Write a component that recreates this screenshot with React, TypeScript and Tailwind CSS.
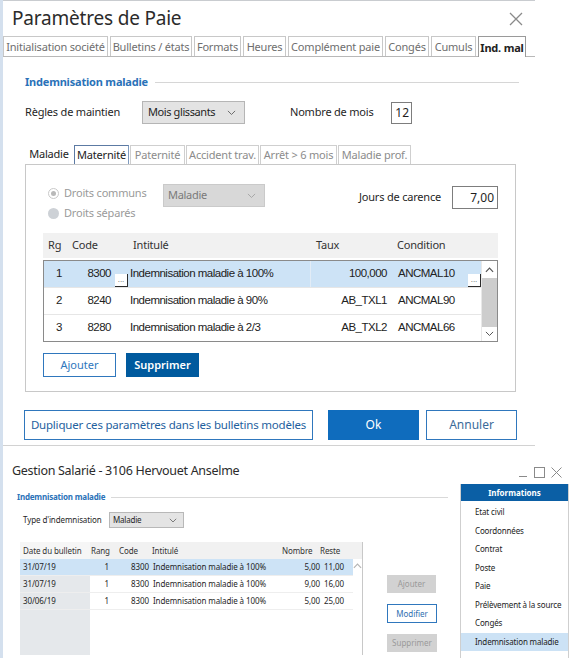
import React from "react";

const Chevron = ({ color = "#6b6b6b", w = 9 }: { color?: string; w?: number }) => (
  <svg width={w} height={w * 0.6} viewBox="0 0 10 6" fill="none">
    <path d="M1 1 L5 5 L9 1" stroke={color} strokeWidth="1.1" />
  </svg>
);

const UpArrow = ({ color = "#555" }: { color?: string }) => (
  <svg width="9" height="6" viewBox="0 0 10 6" fill="none">
    <path d="M1 5 L5 1 L9 5" stroke={color} strokeWidth="1.3" />
  </svg>
);

const Dots = () => (
  <div className="absolute right-0 bottom-0 w-[13px] h-[13px] border-r border-b border-[#2b2b2b] bg-white flex items-end justify-center text-[8px] leading-[8px] text-[#555] pb-[2px] tracking-normal">
    ...
  </div>
);

const topTabs = [
  { t: "Initialisation société", w: 105 },
  { t: "Bulletins / états", w: 82 },
  { t: "Formats", w: 47 },
  { t: "Heures", w: 43 },
  { t: "Complément paie", w: 95 },
  { t: "Congés", w: 44 },
  { t: "Cumuls", w: 45 },
  { t: "Ind. mal", w: 48, active: true },
];

const innerTabs = [
  { t: "Maladie", w: 48, kind: "sel" },
  { t: "Maternité", w: 55, kind: "focus" },
  { t: "Paternité", w: 55, kind: "dis" },
  { t: "Accident trav.", w: 73, kind: "dis" },
  { t: "Arrêt > 6 mois", w: 77, kind: "dis" },
  { t: "Maladie prof.", w: 73, kind: "dis" },
];

const rows = [
  { rg: "1", code: "8300", lib: "Indemnisation maladie à 100%", taux: "100,000", cond: "ANCMAL10", sel: true },
  { rg: "2", code: "8240", lib: "Indemnisation maladie à 90%", taux: "AB_TXL1", cond: "ANCMAL90" },
  { rg: "3", code: "8280", lib: "Indemnisation maladie à 2/3", taux: "AB_TXL2", cond: "ANCMAL66" },
];

const bRows = [
  { d: "31/07/19", n: "5,00", r: "11,00", sel: true },
  { d: "31/07/19", n: "9,00", r: "16,00" },
  { d: "30/06/19", n: "5,00", r: "25,00" },
];

const menu = [
  "Etat civil",
  "Coordonnées",
  "Contrat",
  "Poste",
  "Paie",
  "Prélèvement à la source",
  "Congés",
  "Indemnisation maladie",
];

export default function App() {
  return (
    <div className="w-[575px] h-[658px] bg-white overflow-hidden border-l-[3px] border-[#d4e0ee] font-['Noto_Sans',sans-serif] text-[#1f1f1f]">
      {/* ===== Top dialog ===== */}
      <div className="w-[532px] border-t border-[#c9ccd0]">
        <div className="h-[35px] flex items-center justify-between pl-[9px] pr-[12px]">
          <span className="text-[19px] text-[#2b2b2b] tracking-[-0.2px]">Paramètres de Paie</span>
          <svg width="14" height="14" viewBox="0 0 14 14" fill="none">
            <path d="M1 1 L13 13 M13 1 L1 13" stroke="#8a8a8a" strokeWidth="1.3" />
          </svg>
        </div>
        <div className="h-[21px] flex items-end border-b border-[#b8b8b8]">
          {topTabs.map((tab, i) => (
            <div
              key={i}
              style={{ width: tab.w }}
              className={
                "h-[20px] flex items-center justify-center border border-b-0 text-[11px] leading-none whitespace-nowrap tracking-[-0.2px] " +
                (i === 0 ? "ml-0 " : "ml-[2px] ") +
                (tab.active
                  ? "bg-white border-[#9a9a9a] font-bold text-[#222] h-[21px] -mb-px"
                  : "border-[#c8c8c8] text-[#6e6e6e]")
              }
            >
              {tab.t}
            </div>
          ))}
        </div>

        <div className="pl-[22px] pr-[16px]">
          {/* group label */}
          <div className="mt-[17px] flex items-center h-[16px]">
            <span className="text-[11px] font-bold text-[#2a72b8] tracking-[-0.2px]">Indemnisation maladie</span>
            <div className="flex-1 h-px bg-[#d6d6d6] ml-[7px]" />
          </div>

          {/* regles */}
          <div className="mt-[11px] h-[23px] flex items-center">
            <span className="w-[117px] text-[11px] tracking-[-0.2px]">Règles de maintien</span>
            <div className="w-[103px] h-[23px] bg-[#e3e3e3] border border-[#b5b5b5] flex items-center justify-between pl-[5px] pr-[8px]">
              <span className="text-[11px] tracking-[-0.4px]">Mois glissants</span>
              <Chevron />
            </div>
            <span className="ml-[45px] w-[101px] text-[11px] tracking-[-0.2px]">Nombre de mois</span>
            <div className="w-[21px] h-[22px] border border-[#7d7d7d] flex items-center justify-end pr-[2px] text-[12px]">12</div>
          </div>

          {/* inner tabs */}
          <div className="mt-[21px] w-[491px]">
            <div className="h-[19px] flex items-end">
              {innerTabs.map((tab, i) => (
                <div
                  key={i}
                  style={{ width: tab.w }}
                  className={
                    "h-[19px] flex items-center justify-center text-[11px] whitespace-nowrap tracking-[-0.2px] " +
                    (i > 0 ? "ml-[1px] " : "") +
                    (tab.kind === "sel"
                      ? "text-[#222] bg-white"
                      : tab.kind === "focus"
                      ? "border border-b-0 border-[#7f9bbf] text-[#222] border-l-[#5c7aa3] border-t-[#5c7aa3]"
                      : "border border-b-0 border-[#cfcfcf] text-[#8c8c8c]")
                  }
                >
                  {tab.t}
                </div>
              ))}
            </div>
            <div className="h-[228px] border border-[#c8c8c8] pt-[18px] px-[17px]">
              {/* top section */}
              <div className="h-[50px] flex">
                <div className="w-[120px] pl-[5px]">
                  <div className="h-[20px] flex items-center">
                    <div className="w-[11px] h-[11px] rounded-full border border-[#c9c9c9] flex items-center justify-center">
                      <div className="w-[5px] h-[5px] rounded-full bg-[#b9b9b9]" />
                    </div>
                    <span className="ml-[5px] text-[11px] text-[#9a9a9a] tracking-[-0.2px]">Droits communs</span>
                  </div>
                  <div className="h-[20px] flex items-center">
                    <div className="w-[11px] h-[11px] rounded-full bg-[#cdd1d6]" />
                    <span className="ml-[5px] text-[11px] text-[#9a9a9a] tracking-[-0.2px]">Droits séparés</span>
                  </div>
                </div>
                <div className="mt-[1px] w-[102px] h-[23px] bg-[#d8d8d8] border border-[#cacaca] flex items-center justify-between pl-[4px] pr-[8px]">
                  <span className="text-[11px] text-[#7a7a7a] tracking-[-0.3px]">Maladie</span>
                  <Chevron color="#a8a8a8" />
                </div>
                <div className="ml-auto mt-[3px] h-[23px] flex items-center">
                  <span className="text-[11px] tracking-[-0.2px]">Jours de carence</span>
                  <div className="ml-[11px] w-[46px] h-[23px] border border-[#7d7d7d] flex items-center justify-end pr-[3px] text-[12px]">7,00</div>
                </div>
              </div>

              {/* grid header */}
              <div className="h-[25px] bg-[#f1f1f1] flex items-center text-[11px] text-[#333] tracking-[-0.2px]">
                <span className="w-[29px] pl-[5px]">Rg</span>
                <span className="w-[61px]">Code</span>
                <span className="w-[183px]">Intitulé</span>
                <span className="w-[81px]">Taux</span>
                <span>Condition</span>
              </div>
              {/* grid body */}
              <div className="mt-[2px] h-[82px] border border-[#8a8a8a] flex font-['Liberation_Sans',sans-serif] text-[11.5px] tracking-[-0.5px] text-[#222]">
                <div className="flex-1 flex flex-col">
                  {rows.map((r, i) => (
                    <div
                      key={i}
                      className={
                        "flex items-center " +
                        (i === 2 ? "h-[26px] " : "h-[27px] border-b border-[#e6e6e6] ") +
                        (r.sel ? "bg-[#cde3f6]" : "bg-white")
                      }
                    >
                      <div className="w-[23px] text-right pr-[5px] h-full flex items-center justify-end">{r.rg}</div>
                      <div className="w-[61px] h-full relative flex items-center justify-end pr-[17px]">
                        {r.code}
                        {r.sel && <Dots />}
                      </div>
                      <div className={"w-[183px] h-full flex items-center pl-[2px] " + (r.sel ? "border-r border-[#e2ecf6]" : "")}>{r.lib}</div>
                      <div className="w-[80px] h-full flex items-center justify-end pr-[4px]">{r.taux}</div>
                      <div className="flex-1 h-full relative flex items-center pl-[7px]">
                        {r.cond}
                        {r.sel && <Dots />}
                      </div>
                    </div>
                  ))}
                </div>
                <div className="w-[16px] flex flex-col border-l border-[#e8e8e8] bg-white">
                  <div className="h-[17px] flex items-center justify-center">
                    <UpArrow />
                  </div>
                  <div className="flex-1 bg-[#cdcdcd]" />
                  <div className="h-[14px] flex items-center justify-center">
                    <Chevron color="#555" w={9} />
                  </div>
                </div>
              </div>

              {/* buttons */}
              <div className="mt-[11px] flex gap-[10px]">
                <div className="w-[73px] h-[24px] border border-[#2f77bd] flex items-center justify-center text-[11px] text-[#2f77bd]">Ajouter</div>
                <div className="w-[73px] h-[24px] bg-[#005a9e] flex items-center justify-center text-[11px] text-white font-semibold">Supprimer</div>
              </div>
            </div>
          </div>

          {/* bottom buttons */}
          <div className="mt-[18px] flex -ml-[1px]">
            <div className="w-[289px] h-[30px] border border-[#2f77bd] flex items-center justify-center text-[11.5px] text-[#1f5f9e] tracking-[-0.2px]">
              Dupliquer ces paramètres dans les bulletins modèles
            </div>
            <div className="ml-[15px] w-[91px] h-[30px] bg-[#0f6cbd] flex items-center justify-center text-[12px] text-white">Ok</div>
            <div className="ml-[7px] w-[91px] h-[30px] border border-[#2f77bd] flex items-center justify-center text-[12px] text-[#3b6b9a]">Annuler</div>
          </div>
        </div>
        <div className="mt-[5px] h-px bg-[#d2d2d2]" />
      </div>

      {/* ===== Bottom dialog ===== */}
      <div className="mt-[13px] w-[572px]">
        <div className="h-[25px] flex items-center justify-between pl-[9px] pr-[13px]">
          <span className="text-[12.5px] text-[#2b2b2b] tracking-[-0.3px]">Gestion Salarié - 3106 Hervouet Anselme</span>
          <div className="flex items-center gap-[6px] mt-[2px]">
            <svg width="10" height="11" viewBox="0 0 10 11" fill="none">
              <path d="M1 9.5 H9" stroke="#8a8a8a" strokeWidth="1" />
            </svg>
            <svg width="11" height="11" viewBox="0 0 11 11" fill="none">
              <rect x="0.5" y="0.5" width="10" height="10" stroke="#8a8a8a" strokeWidth="1" />
            </svg>
            <svg width="11" height="11" viewBox="0 0 11 11" fill="none">
              <path d="M0.5 0.5 L10.5 10.5 M10.5 0.5 L0.5 10.5" stroke="#8a8a8a" strokeWidth="1" />
            </svg>
          </div>
        </div>

        <div className="flex h-[175px]">
          {/* left content */}
          <div className="w-[457px]">
            <div className="mt-[7px] pl-[14px] pr-[12px] flex items-center h-[12px]">
              <span className="text-[8px] font-bold text-[#2a72b8] tracking-[-0.2px]">Indemnisation maladie</span>
              <div className="flex-1 h-px bg-[#d9d9d9] ml-[6px]" />
            </div>
            <div className="mt-[9px] pl-[20px] flex items-center h-[16px]">
              <span className="w-[86px] text-[8px] tracking-[-0.1px]">Type d'indemnisation</span>
              <div className="w-[75px] h-[16px] bg-[#e4e4e4] border border-[#b8b8b8] flex items-center justify-between pl-[3px] pr-[6px]">
                <span className="text-[8px] tracking-[-0.2px]">Maladie</span>
                <Chevron w={8} />
              </div>
            </div>
            <div className="mt-[14px] pl-[17px] flex">
              {/* grid */}
              <div className="w-[343px] h-[113px] border-r border-[#c8c8c8] flex flex-col text-[8px] tracking-[-0.1px]">
                <div className="h-[17px] bg-[#f1f1f1] flex items-center text-[#333]">
                  <span className="w-[70px] pl-[3px] bg-[#f6f6f6] h-full flex items-center">Date du bulletin</span>
                  <span className="w-[28px] pl-[1px]">Rang</span>
                  <span className="w-[33px] pl-[1px]">Code</span>
                  <span className="w-[131px] pl-[1px]">Intitulé</span>
                  <span className="w-[38px]">Nombre</span>
                  <span>Reste</span>
                </div>
                <div className="flex-1 flex">
                  <div className="flex-1 flex flex-col relative">
                    <div className="absolute left-0 top-0 bottom-0 w-[70px] bg-[#e5e8eb]" />
                    {bRows.map((r, i) => (
                      <div
                        key={i}
                        className={"relative h-[17px] flex items-center border-b border-[#eeeeee] " + (r.sel ? "bg-[#cde3f6]" : "")}
                      >
                        <span className="w-[70px] pl-[3px]">{r.d}</span>
                        <span className="w-[28px] text-right pr-[9px]">1</span>
                        <span className="w-[33px] text-right pr-[2px]">8300</span>
                        <span className="w-[125px] pl-[2px]">Indemnisation maladie à 100%</span>
                        <span className="w-[44px] text-right">{r.n}</span>
                        <span className="w-[33px] pl-[4px]">{r.r}</span>
                      </div>
                    ))}
                  </div>
                  <div className="w-[13px] flex justify-center pt-[4px]">
                    <UpArrow color="#b5b5b5" />
                  </div>
                </div>
              </div>
              {/* buttons */}
              <div className="ml-[24px] pt-[33px] flex flex-col text-[8px]">
                <div className="w-[49px] h-[18px] bg-[#d2d2d2] flex items-center justify-center text-[#9a9a9a]">Ajouter</div>
                <div className="mt-[11px] w-[50px] h-[19px] border border-[#2f77bd] flex items-center justify-center text-[#2f6fb0]">Modifier</div>
                <div className="mt-[11px] w-[50px] h-[18px] bg-[#d2d2d2] flex items-center justify-center text-[#9a9a9a]">Supprimer</div>
              </div>
            </div>
          </div>

          {/* right panel */}
          <div className="w-[109px] border-l border-r border-[#cfcfcf] flex flex-col">
            <div className="h-[17px] bg-[#0b5fa5] flex items-center justify-center text-[8px] font-bold text-white">Informations</div>
            <div className="pt-[2px] flex flex-col">
              {menu.map((m, i) => (
                <div
                  key={i}
                  className={
                    "h-[18.5px] flex items-center pl-[14px] text-[8px] tracking-[-0.15px] text-[#222] whitespace-nowrap " +
                    (i === menu.length - 1 ? "bg-[#cce2f5]" : "")
                  }
                >
                  {m}
                </div>
              ))}
            </div>
          </div>
        </div>
      </div>
    </div>
  );
}
